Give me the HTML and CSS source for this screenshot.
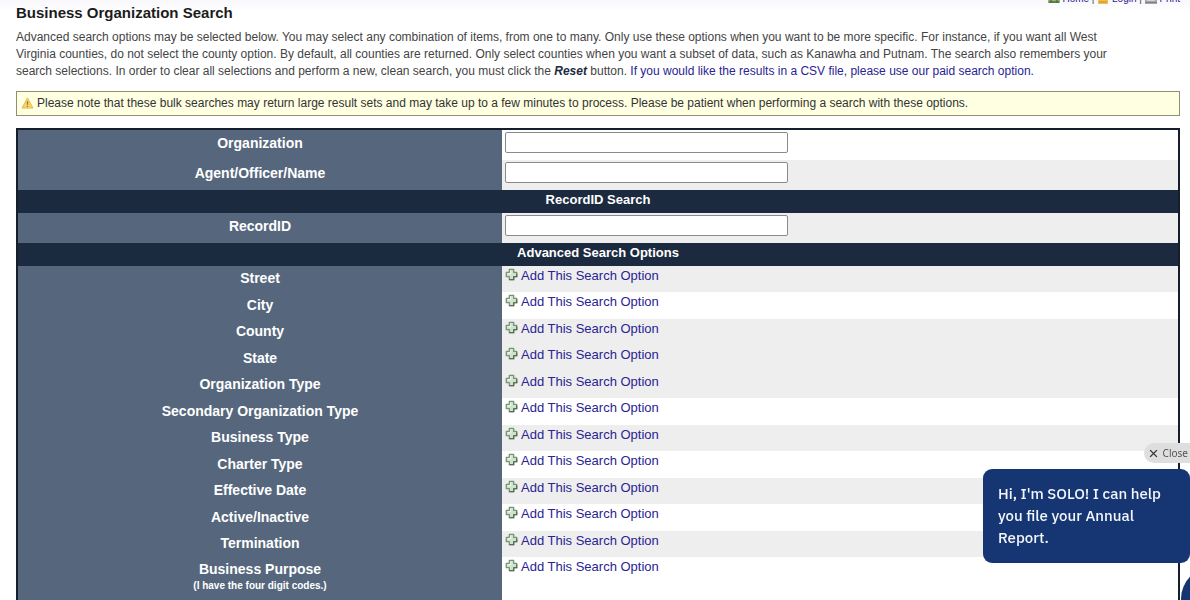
FILE: index.html
```
<!DOCTYPE html>
<html lang="en">
<head>
<meta charset="utf-8">
<title>Business Organization Search</title>
<link rel="stylesheet" href="styles.css">
</head>
<body>
<svg class="defs" aria-hidden="true">
  <symbol id="plus" viewBox="0 0 12 12">
    <path d="M4 1.200h4V4h2.800v4H8v2.800H4V8H1.200V4H4z" fill="#cfe3cc" stroke="#789478" stroke-width="1.200" stroke-linejoin="round"/>
    <path d="M8 8v2.800H4M10.800 5v3H8" fill="none" stroke="#566d57" stroke-width="1.200"/>
    <path d="M5.200 2.400v2.800H2.400" fill="none" stroke="#edf6eb"/>
  </symbol>
</svg>
<nav class="tools">
  <a href="#home"><svg class="tool-icon" viewBox="0 0 12 12"><path d="M0 6l6-5 6 5v5H0z" fill="#94b574"/><path d="M1 10h10M3 7v4M9 7v4" stroke="#4f7040" stroke-width="1.500"/></svg> Home</a> |
  <a href="#login"><svg class="tool-icon" viewBox="0 0 12 12"><path d="M1 4h10v8H1z" fill="#efc04f"/><path d="M3 4V1h5v3M2 10h8" fill="none" stroke="#c58b2c"/></svg> Login</a> |
  <a href="#print"><svg class="tool-icon" viewBox="0 0 12 12"><path d="M0 5h12v6H0z" fill="#a5a7ad"/><path d="M0 11h12M3 5V1h6v4" fill="none" stroke="#55565d"/><path d="M2 8h8" stroke="#fff"/></svg> Print</a>
</nav>
<main class="page">
  <h1 class="title">Business Organization Search</h1>
  <p class="intro">Advanced search options may be selected below. You may select any combination of items, from one to many. Only use these options when you want to be more specific. For instance, if you want all West<br>Virginia counties, do not select the county option. By default, all counties are returned. Only select counties when you want a subset of data, such as Kanawha and Putnam. The search also remembers your<br>search selections. In order to clear all selections and perform a new, clean search, you must click the <strong class="reset">Reset</strong> button. <a href="#paid">If you would like the results in a CSV file, please use our paid search option.</a></p>
  <p class="notice"><svg class="warn" viewBox="0 0 14 13" aria-hidden="true"><path d="M7 1l6 11H1z" fill="#f6d46b" stroke="#dfb94e" stroke-linejoin="round"/><path d="M7 4.500v4M7 9.500v1.200" stroke="#94752b" stroke-width="1.300"/></svg>Please note that these bulk searches may return large result sets and may take up to a few minutes to process. Please be patient when performing a search with these options.</p>
  <form>
  <table class="search">
    <colgroup><col class="label-col"><col></colgroup>
    <tbody class="fields">
      <tr><th scope="row"><label for="org">Organization</label></th><td><input class="box" id="org" type="text"></td></tr>
      <tr class="alt"><th scope="row"><label for="agent">Agent/Officer/Name</label></th><td><input class="box" id="agent" type="text"></td></tr>
      <tr><th class="band" colspan="2">RecordID Search</th></tr>
      <tr class="alt"><th scope="row"><label for="rec">RecordID</label></th><td><input class="box" id="rec" type="text"></td></tr>
      <tr><th class="band" colspan="2">Advanced Search Options</th></tr>
    </tbody>
    <tbody class="options">
      <tr class="alt"><th scope="row">Street</th><td><a href="#street"><svg class="plus"><use href="#plus"/></svg>Add This Search Option</a></td></tr>
      <tr><th scope="row">City</th><td><a href="#city"><svg class="plus"><use href="#plus"/></svg>Add This Search Option</a></td></tr>
      <tr class="alt"><th scope="row">County</th><td><a href="#county"><svg class="plus"><use href="#plus"/></svg>Add This Search Option</a></td></tr>
      <tr class="alt"><th scope="row">State</th><td><a href="#state"><svg class="plus"><use href="#plus"/></svg>Add This Search Option</a></td></tr>
      <tr class="alt"><th scope="row">Organization Type</th><td><a href="#orgtype"><svg class="plus"><use href="#plus"/></svg>Add This Search Option</a></td></tr>
      <tr><th scope="row">Secondary Organization Type</th><td><a href="#sectype"><svg class="plus"><use href="#plus"/></svg>Add This Search Option</a></td></tr>
      <tr class="alt"><th scope="row">Business Type</th><td><a href="#biztype"><svg class="plus"><use href="#plus"/></svg>Add This Search Option</a></td></tr>
      <tr><th scope="row">Charter Type</th><td><a href="#charter"><svg class="plus"><use href="#plus"/></svg>Add This Search Option</a></td></tr>
      <tr class="alt"><th scope="row">Effective Date</th><td><a href="#effective"><svg class="plus"><use href="#plus"/></svg>Add This Search Option</a></td></tr>
      <tr><th scope="row">Active/Inactive</th><td><a href="#active"><svg class="plus"><use href="#plus"/></svg>Add This Search Option</a></td></tr>
      <tr class="alt"><th scope="row">Termination</th><td><a href="#termination"><svg class="plus"><use href="#plus"/></svg>Add This Search Option</a></td></tr>
      <tr><th scope="row">Business Purpose<small class="hint">(I have the four digit codes.)</small></th><td><a href="#purpose"><svg class="plus"><use href="#plus"/></svg>Add This Search Option</a></td></tr>
    </tbody>
  </table>
  </form>
</main>
<aside class="chat">
  <button class="close" type="button"><svg class="x" viewBox="0 0 8 8" aria-hidden="true"><path d="M1 1l6 6M7 1L1 7" stroke="#333" stroke-width="1.200"/></svg>Close</button>
  <p class="bubble">Hi, I'm SOLO! I can help you file your Annual Report.</p>
  <span class="avatar"></span>
</aside>
</body>
</html>
```
FILE: styles.css
```
body {
  margin: 0;
  background: linear-gradient(#f8f8fc, #fff 12px) no-repeat;
  color: #444;
  font: 13px/16px "Liberation Sans", Arial, sans-serif;
}
a { color: #2a2393; text-decoration: none; }
.defs { position: absolute; width: 0; height: 0; }
.tools {
  position: absolute;
  top: -9px;
  right: 10px;
  font-size: 10px;
  line-height: 16px;
}
.tool-icon { width: 12px; height: 12px; vertical-align: -2px; }
.page { padding: 4px 10px 0 16px; }
.title { margin: 0 0 8px; color: #1c1c1c; font-size: 15px; line-height: 17px; }
.intro { margin: 0 0 11px; font-size: 12px; line-height: 17px; }
.reset { color: #1c2b42; font-style: italic; }
.notice {
  margin: 0 0 12px;
  padding: 3px 4px;
  border: 1px solid #8f8f74;
  background: #ffffe2;
  color: #333;
  font-size: 12px;
  line-height: 17px;
}
.warn { width: 13px; height: 12px; margin-right: 3px; vertical-align: -2px; }
.search {
  width: 100%;
  border: 2px solid #141e2d;
  border-bottom: 0;
  border-spacing: 0;
  table-layout: fixed;
}
.label-col { width: 484px; }
.search th, .search td { padding: 0; }
.search th { background: #56677d; color: #fff; font-size: 14px; }
.search td { padding-left: 3px; text-align: left; vertical-align: top; }
.search .alt td { background: #eee; }
.fields tr { height: 30px; }
.search .fields th { padding-bottom: 4px; }
.search .fields .band {
  height: 17px;
  padding: 1px 0 5px;
  background: #1c2a40;
  font-size: 13px;
}
.fields tr:has(.band) { height: 23px; }
.box {
  display: block;
  box-sizing: border-box;
  width: 283px;
  height: 21px;
  margin-top: 2px;
  border: 1px solid #8a8a8a;
  border-radius: 2px;
  background: #fff;
}
.options tr { height: 26px; }
.options tr:nth-child(even) { height: 27px; }
.search .options td { padding-top: 2px; }
.search .options th { padding-bottom: 2px; }
.search .options tr:last-child th { padding: 4px 0 6px; vertical-align: top; }
.plus { width: 13px; height: 13px; margin-right: 3px; vertical-align: -1px; }
.hint { display: block; margin-top: 1px; font-size: 10px; }
.chat {
  position: fixed;
  right: 0;
  bottom: 37px;
  width: 207px;
  font-family: "IBM Plex Sans", "Noto Sans", sans-serif;
}
.close {
  display: flex;
  align-items: center;
  gap: 5px;
  height: 20px;
  margin: 0 0 6px auto;
  padding: 0 2px 0 5px;
  border: 0;
  border-radius: 10px 0 0 10px;
  background: #dedede;
  color: #555;
  font: 10px "Noto Sans", sans-serif;
}
.x { width: 9px; height: 9px; }
.bubble {
  margin: 0;
  padding: 14px 20px 14px 15px;
  border-radius: 9px;
  background: #153672;
  color: #f2f5fa;
  font-size: 15px;
  font-weight: 500;
  line-height: 22px;
}
.avatar {
  position: absolute;
  top: 124px;
  left: 198px;
  width: 64px;
  height: 64px;
  border-radius: 50%;
  background: #153672;
}
```
